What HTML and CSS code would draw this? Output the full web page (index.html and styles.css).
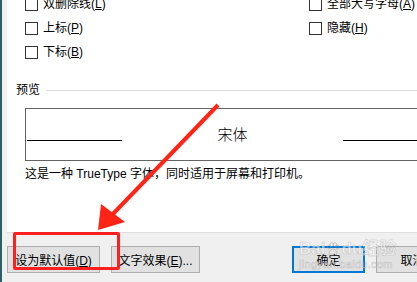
FILE: index.html
```html
<!DOCTYPE html>
<html lang="zh-CN">
<head>
  <meta charset="UTF-8">
  <title>字体</title>
  <link rel="stylesheet" href="styles.css">
</head>
<body>
  <div class="window">
    <div class="panel">
      <div class="effects">
        <label class="opt"><span class="box"></span><span>双删除线(<u>L</u>)</span></label>
        <label class="opt"><span class="box"></span><span>全部大写字母(<u>A</u>)</span></label>
        <label class="opt"><span class="box"></span><span>上标(<u>P</u>)</span></label>
        <label class="opt"><span class="box"></span><span>隐藏(<u>H</u>)</span></label>
        <label class="opt"><span class="box"></span><span>下标(<u>B</u>)</span></label>
      </div>

      <div class="legend"><span>预览</span><i class="rule"></i></div>

      <div class="preview">
        <i class="baseline"></i>
        <span class="sample">宋体</span>
        <i class="baseline"></i>
      </div>

      <p class="note">这是一种 TrueType 字体，同时适用于屏幕和打印机。</p>
    </div>

    <div class="actions">
      <button class="btn btn-default">设为默认值(<u>D</u>)</button>
      <button class="btn btn-effects">文字效果(<u>E</u>)...</button>
      <button class="btn btn-ok">确定</button>
      <button class="btn btn-cancel">取消</button>
    </div>
  </div>

  <!-- annotation overlays -->
  <svg class="arrow" width="417" height="282" viewBox="0 0 417 282">
    <line x1="218" y1="105" x2="110" y2="217" stroke="#ff2415" stroke-width="4"/>
    <polygon points="98,230 101,204 125,222" fill="#ff2415"/>
  </svg>
  <div class="highlight"></div>

  <div class="watermark">
    <div class="wm-logo">Bai<svg class="paw" width="14" height="14" viewBox="0 0 14 14"><g fill="none" stroke="rgba(150,150,150,.45)" stroke-width="1"><ellipse cx="3" cy="5" rx="1.6" ry="2"/><ellipse cx="5.8" cy="2.5" rx="1.6" ry="2"/><ellipse cx="9" cy="2.5" rx="1.6" ry="2"/><ellipse cx="11.6" cy="5" rx="1.6" ry="2"/><path d="M7 7c-3 0-5 4-3 6h6c2-2 0-6-3-6z"/></g></svg>du经验</div>
    <div class="wm-url">jingyan.baidu.com</div>
  </div>
</body>
</html>
```

FILE: styles.css
```css
body { margin: 0; width: 417px; height: 282px; overflow: hidden; position: relative; background: #2d5f67; font-family: "Liberation Sans", "Noto Sans CJK SC", sans-serif; font-size: 12px; color: #000; }

.window { margin-left: 2px; height: 282px; background: #f0f0f0; display: flex; flex-direction: column; }
.panel { height: 233px; margin-left: 5px; background: #fff; border-bottom: 1px solid #dfdfdf; box-sizing: border-box; overflow: hidden; flex-shrink: 0; }

.effects { display: grid; grid-template-columns: 284px 1fr; grid-auto-rows: 24px; margin-top: -8px; padding-left: 18px; }
.opt { display: flex; align-items: center; gap: 5px; line-height: 16px; white-space: nowrap; }
.box { width: 13px; height: 13px; box-sizing: border-box; border: 1px solid #333; background: #fff; flex-shrink: 0; }

.legend { display: flex; align-items: center; gap: 6px; margin-top: 18px; padding-left: 9px; height: 16px; line-height: 16px; }
.rule { flex: 1; height: 1px; background: #dcdcdc; }

.preview { margin: 10px 0 0 18px; width: 415px; height: 53px; box-sizing: border-box; border: 1px solid #646464; display: flex; align-items: center; justify-content: space-between; padding: 0 1px; }
.baseline { width: 95px; height: 1px; background: #000; align-self: flex-start; margin-top: 31px; }
.sample { font-size: 15px; line-height: 1; font-weight: 300; }

.note { margin: 5px 0 0 18px; line-height: 16px; white-space: nowrap; }

.actions { display: flex; padding: 13px 0 0 5px; }
.btn { height: 27px; padding: 0; font: inherit; color: #000; background: #e1e1e1; border: 1px solid #adadad; flex-shrink: 0; box-sizing: border-box; }
.btn-default { width: 93px; }
.btn-effects { width: 89px; margin-left: 11px; }
.btn-ok { width: 73px; margin-left: 92px; border: 2px solid #0078d7; }
.btn-cancel { width: 73px; margin-left: 11px; }

.arrow { position: absolute; left: 0; top: 0; pointer-events: none; }
.highlight { position: absolute; left: 13px; top: 232px; width: 107px; height: 38px; box-sizing: border-box; border: 3px solid #ff1f1f; border-radius: 2px; }

.watermark { position: absolute; left: 299px; top: 239px; color: rgba(255, 255, 255, .55); -webkit-text-stroke: 0.6px rgba(150, 150, 150, .45); font-family: "Liberation Sans", "Noto Sans CJK SC", sans-serif; }
.wm-logo { font-size: 17px; font-weight: bold; line-height: 19px; display: flex; align-items: center; }
.paw { margin: 0 1px; }
.wm-url { font-size: 11px; line-height: 13px; letter-spacing: 0.3px; }
```
